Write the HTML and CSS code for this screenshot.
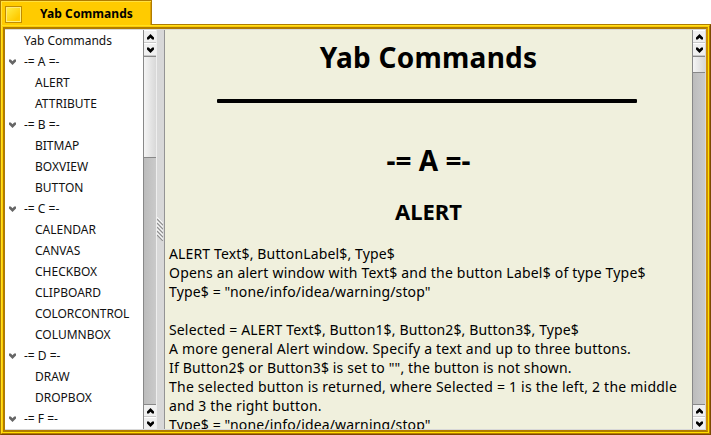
FILE: index.html
```html
<!DOCTYPE html>
<html lang="en">
<head>
<meta charset="utf-8">
<title>Yab Commands</title>
<link rel="stylesheet" href="styles.css">
</head>
<body>
<svg class="defs" width="0" height="0">
<symbol id="up" viewBox="0 0 7 6"><path d="M3.5 0 7 3.6V5.5H5.2L3.5 3.8 1.8 5.5H0V3.6Z"/></symbol>
<symbol id="down" viewBox="0 0 7 6"><path d="M3.5 6 7 2.4V.5H5.2L3.5 2.2 1.8 .5H0V2.4Z"/></symbol>
</svg>
<div class="window">
<header class="tab"><span class="close"></span><span class="title">Yab Commands</span></header>
<div class="frame"><div class="frame-mid"><div class="frame-in"><main class="view">
<nav class="list">
<div class="row top">Yab Commands</div>
<div class="row group"><svg><use href="#down"/></svg>-= A =-</div>
<div class="row item">ALERT</div>
<div class="row item">ATTRIBUTE</div>
<div class="row group"><svg><use href="#down"/></svg>-= B =-</div>
<div class="row item">BITMAP</div>
<div class="row item">BOXVIEW</div>
<div class="row item">BUTTON</div>
<div class="row group"><svg><use href="#down"/></svg>-= C =-</div>
<div class="row item">CALENDAR</div>
<div class="row item">CANVAS</div>
<div class="row item">CHECKBOX</div>
<div class="row item">CLIPBOARD</div>
<div class="row item snug">COLORCONTROL</div>
<div class="row item">COLUMNBOX</div>
<div class="row group"><svg><use href="#down"/></svg>-= D =-</div>
<div class="row item">DRAW</div>
<div class="row item">DROPBOX</div>
<div class="row group"><svg><use href="#down"/></svg>-= F =-</div>
</nav>
<div class="scroll">
<span class="btn"><svg><use href="#up"/></svg></span><span class="btn"><svg><use href="#down"/></svg></span>
<span class="thumb long"></span><span class="trough"></span>
<span class="btn end"><svg><use href="#up"/></svg></span><span class="btn last"><svg><use href="#down"/></svg></span>
</div>
<div class="splitter"><svg width="6" height="24" viewBox="0 0 6 24">
<path class="light" d="M0 .5 6 6.5M0 4.5 6 10.5M0 8.5 6 14.5M0 12.5 6 18.5M0 16.5 6 22.5"/>
<path class="dark" d="M0 2 6 8M0 6 6 12M0 10 6 16M0 14 6 20M0 18 6 24"/></svg></div>
<article class="doc">
<h1>Yab Commands</h1>
<hr>
<h2>-= A =-</h2>
<h3>ALERT</h3>
<p>ALERT Text$, ButtonLabel$, Type$<br><span class="wide">Opens an alert window with Text$ and the button Label$ of type Type$</span><br>Type$ = "none/info/idea/warning/stop"</p>
<p>Selected = ALERT Text$, Button1$, Button2$, Button3$, Type$<br><span class="wide">A more general Alert window. Specify a text and up to three buttons.</span><br>If Button2$ or Button3$ is set to "", the button is not shown.<br><span class="wider">The selected button is returned, where Selected = 1 is the left, 2 the middle</span><br>and 3 the right button.<br>Type$ = "none/info/idea/warning/stop"</p>
</article>
<div class="scroll">
<span class="btn"><svg><use href="#up"/></svg></span><span class="btn"><svg><use href="#down"/></svg></span>
<span class="thumb short"></span><span class="trough"></span>
<span class="btn end"><svg><use href="#up"/></svg></span><span class="btn last"><svg><use href="#down"/></svg></span>
</div>
</main></div></div></div>
</div>
</body>
</html>
```
FILE: styles.css
```css
* { box-sizing: border-box; }
body { margin: 0; background: #fff; overflow: hidden; font-family: "Noto Sans", sans-serif; color: #000; }
.defs { position: absolute; }
.window { width: 711px; height: 435px; display: flex; flex-direction: column; }
.tab {
  position: relative; z-index: 1; flex: none; width: 152px; height: 25px; margin-bottom: -1px;
  display: flex; align-items: center; padding: 2px 0 0 4px;
  background: #ffcb00; border: solid #b07c00; border-width: 1px 1px 0 1px;
  box-shadow: inset 1px 1px #ffe040, inset -1px 0 #e0a400;
}
.close { width: 17px; height: 17px; border: 1px solid #c08c00; background: linear-gradient(135deg, #fff04a, #ffcb00 75%); box-shadow: inset -1px -1px #fff080, inset 1px 1px #ffe878; }
.title { margin-left: 18px; font-size: 12px; font-weight: 700; line-height: 18px; letter-spacing: .08px; white-space: nowrap; }
.frame { flex: 1; min-height: 0; border: 1px solid; border-color: #b07c00 #7c4a00 #7c4a00 #b07c00; }
.frame-mid { height: 100%; border: solid; border-width: 1px; border-color: #ffe020 #b87800 #b87800 #ffe020; }
.frame-in { height: 100%; border: 1px solid; border-color: #ffcb00 #ffe100 #ffe100 #ffcb00; background: #ffcb00; }
.view { height: 100%; display: flex; border: solid; border-width: 2px; border-color: #b07c00 #d09000 #b07c00 #b07c00; background: #d8d8d8; padding: 1px 0; overflow: hidden; }
.list { flex: none; width: 138px; background: #fff; overflow: hidden; }
.row { height: 21px; line-height: 21px; font-size: 12px; white-space: nowrap; display: flex; align-items: center; color: #111; }
.top { padding-left: 19px; }
.group { padding-left: 4px; }
.group svg { width: 7px; height: 6px; margin-right: 8px; fill: #666; }
.item { padding-left: 30px; }
.snug { letter-spacing: -.08px; }
.scroll { flex: none; width: 13px; border-left: 1px solid #888; display: flex; flex-direction: column; background: #c6c6c6; }
.btn { flex: none; height: 13px; display: flex; align-items: center; justify-content: center; background: #f0f0f0; border-bottom: 1px solid #c8c8c8; border-top: 1px solid #fff; }
.btn svg { width: 7px; height: 6px; fill: #000; }
.thumb { flex: none; border: solid; border-width: 1px 0; border-color: #888; background: linear-gradient(90deg, #f4f4f4, #d8d8d8); }
.long { height: 102px; }
.short { height: 17px; }
.trough { flex: 1; background: linear-gradient(90deg, #bcbcbc, #cacaca); }
.end { border-top-color: #888; }
.last { border-bottom: 0; height: 12px; }
.splitter { flex: none; width: 9px; border-right: 1px solid #949494; border-left: 1px solid #eee; background: #d8d8d8; display: flex; align-items: center; padding: 0 0 1px; }
.splitter path { fill: none; stroke-width: 1.2; }
.light { stroke: #fff; }
.dark { stroke: #909090; }
.doc { flex: none; width: 527px; background: #f0f0dd; padding: 8px 0 0 4px; overflow: hidden; }
h1, h2, h3 { margin: 0 4px 0 0; text-align: center; font-weight: 700; }
h1, h2 { font-size: 28px; line-height: 38px; }
h1 { letter-spacing: .25px; }
h3 { font-size: 22px; line-height: 29px; margin-top: 18px; }
hr { width: 420px; height: 4px; margin: 23px auto 38px 48px; border: 0; border-radius: 1px; background: #000; }
p { margin: 0 0 19px; font-size: 14px; line-height: 19px; letter-spacing: .145px; white-space: nowrap; }
.wide { letter-spacing: .2px; }
.wider { letter-spacing: .225px; }
h3 + p { margin-top: 18px; }
```
